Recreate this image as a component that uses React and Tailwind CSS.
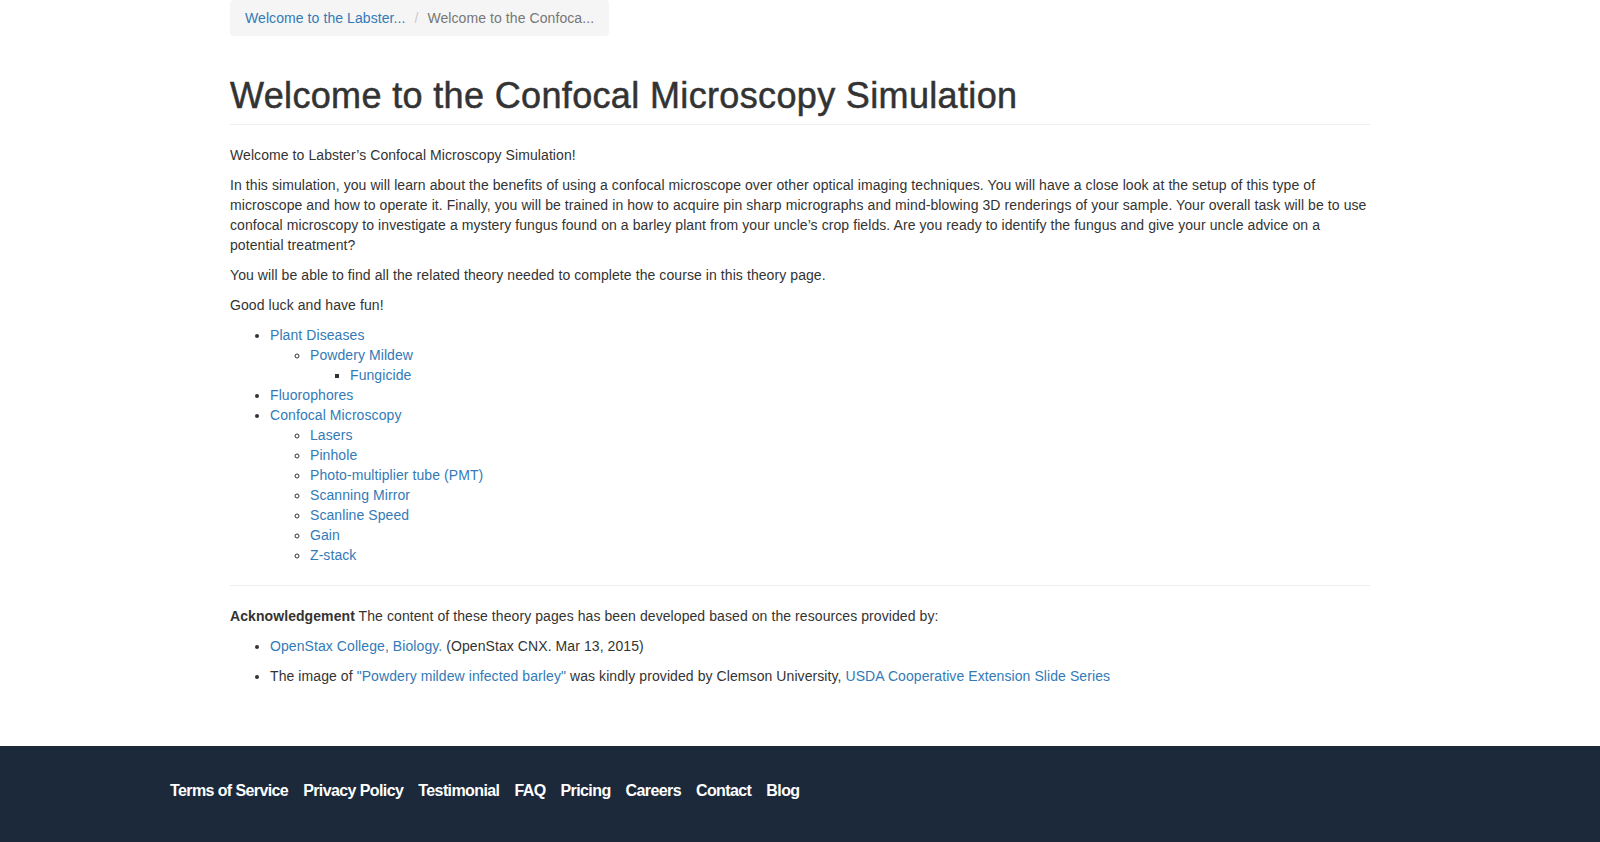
import React from "react";

const A = ({ children }) => (
  <a href="#" className="text-[#337ab7] no-underline">
    {children}
  </a>
);

export default function App() {
  return (
    <div className="font-['Liberation_Sans',Arial,sans-serif] text-[14px] leading-[20px] text-[#333] bg-white min-h-screen tracking-[0.08px]">
      <div className="max-w-[1170px] mx-auto px-[15px] pb-[50px]">
        <div className="inline-block bg-[#f5f5f5] rounded-[4px] px-[15px] py-[8px]">
          <A>Welcome to the Labster...</A>{" "}
          <span className="px-[5px] text-[#ccc]">/&nbsp;</span>
          <span className="text-[#777]">Welcome to the Confoca...</span>
        </div>

        <div className="mt-[40px] pb-[8px] mb-[20px] border-b border-[#eee]">
          <h1 className="m-0 text-[36px] leading-[40px] font-medium tracking-[0.35px] text-[#333] [-webkit-text-stroke:0.5px_#333]">
            Welcome to the Confocal Microscopy Simulation
          </h1>
        </div>

        <p className="mb-[10px]">Welcome to Labster’s Confocal Microscopy Simulation!</p>
        <p className="mb-[10px]">
          In this simulation, you will learn about the benefits of using a confocal microscope over other optical imaging
          techniques. You will have a close look at the setup of this type of microscope and how to operate it. Finally,
          you will be trained in how to acquire pin sharp micrographs and mind-blowing 3D renderings of your sample. Your
          overall task will be to use confocal microscopy to investigate a mystery fungus found on a barley plant from
          your uncle’s crop fields. Are you ready to identify the fungus and give your uncle advice on a potential
          treatment?
        </p>
        <p className="mb-[10px]">
          You will be able to find all the related theory needed to complete the course in this theory page.
        </p>
        <p className="mb-[10px]">Good luck and have fun!</p>

        <ul className="list-disc pl-[40px] mb-[10px]">
          <li>
            <A>Plant Diseases</A>
            <ul className="list-[circle] pl-[40px]">
              <li>
                <A>Powdery Mildew</A>
                <ul className="list-[square] pl-[40px]">
                  <li>
                    <A>Fungicide</A>
                  </li>
                </ul>
              </li>
            </ul>
          </li>
          <li>
            <A>Fluorophores</A>
          </li>
          <li>
            <A>Confocal Microscopy</A>
            <ul className="list-[circle] pl-[40px]">
              <li><A>Lasers</A></li>
              <li><A>Pinhole</A></li>
              <li><A>Photo-multiplier tube (PMT)</A></li>
              <li><A>Scanning Mirror</A></li>
              <li><A>Scanline Speed</A></li>
              <li><A>Gain</A></li>
              <li><A>Z-stack</A></li>
            </ul>
          </li>
        </ul>

        <hr className="my-[20px] border-0 border-t border-[#eee]" />

        <p className="mb-[10px]">
          <strong className="font-bold">Acknowledgement</strong> The content of these theory pages has been developed
          based on the resources provided by:
        </p>
        <ul className="list-disc pl-[40px] mb-[10px]">
          <li>
            <p className="mb-[10px]">
              <A>OpenStax College, Biology.</A> (OpenStax CNX. Mar 13, 2015)
            </p>
          </li>
          <li>
            <p className="mb-[10px]">
              The image of <A>"Powdery mildew infected barley"</A> was kindly provided by Clemson University,{" "}
              <A>USDA Cooperative Extension Slide Series</A>
            </p>
          </li>
        </ul>
      </div>

      <footer className="bg-[#1b293b] pt-[35px] pb-[60px]">
        <div className="max-w-[1260px] mx-auto">
          <nav className="flex gap-[15px] text-[16px] leading-[20px] font-bold tracking-[-0.6px] text-white">
            <a href="#">Terms of Service</a>
            <a href="#">Privacy Policy</a>
            <a href="#">Testimonial</a>
            <a href="#">FAQ</a>
            <a href="#">Pricing</a>
            <a href="#">Careers</a>
            <a href="#">Contact</a>
            <a href="#">Blog</a>
          </nav>
        </div>
      </footer>
    </div>
  );
}
